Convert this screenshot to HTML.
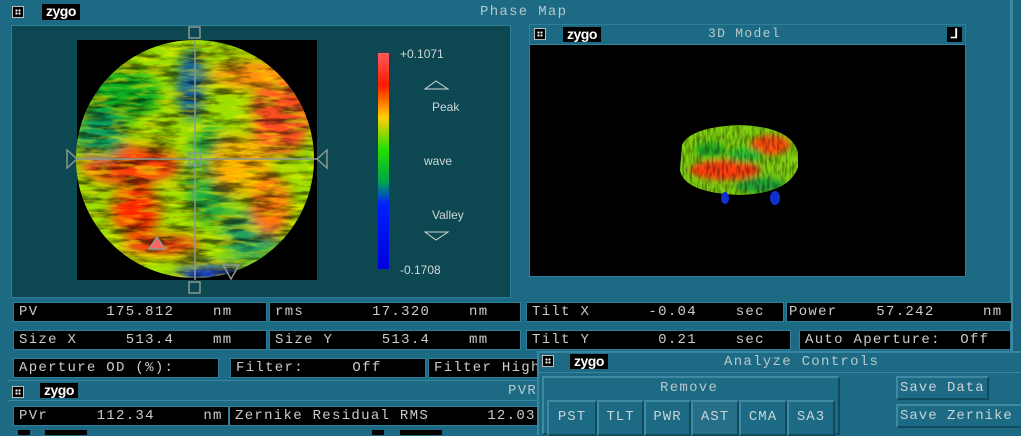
<!DOCTYPE html>
<html><head><meta charset="utf-8"><style>
*{margin:0;padding:0;box-sizing:border-box}
body{width:1021px;height:435px;overflow:hidden;background:#1d6a84;font-family:"Liberation Mono",monospace;position:relative}
.a{position:absolute}
.box{position:absolute;background:#000;color:#c8cccc;font-size:14px;letter-spacing:1.3px;line-height:19px;height:20px;white-space:pre;overflow:hidden;border:1px solid #2f7f98;padding-left:5px}
.cl{position:absolute;width:12px;height:12px;background:#000;border:1px solid #bbb}
.cl:after{content:"";position:absolute;left:2px;top:2px;width:6px;height:6px;background:radial-gradient(circle,#fff 1px,transparent 1.2px) 0 0/3px 3px}
.zy{position:absolute;background:#000;color:#fff;font:bold 14px "Liberation Sans",sans-serif;line-height:15px;padding:0 4px;letter-spacing:-0.5px}
.t{position:absolute;color:#b8c8cc;font-size:14px;letter-spacing:1.3px;white-space:pre}
.btn{position:absolute;background:#1d6a84;border:2px solid;border-color:#3f8aa2 #0f4a5d #0f4a5d #3f8aa2;color:#c8d4d6;font-size:14px;letter-spacing:1px;text-align:center;line-height:30px;white-space:pre}
</style></head><body>
<div class="cl" style="left:12px;top:6px"></div>
<div class="zy" style="left:42px;top:4px;height:16px">zygo</div>
<div class="t" style="left:480px;top:4px">Phase Map</div>
<div class="a" style="left:1010px;top:0;width:3px;height:352px;background:#3a8aa4"></div>
<div class="a" style="left:1013px;top:0;width:8px;height:352px;background:#1a6480"></div>
<div class="a" style="left:11px;top:25px;width:500px;height:273px;background:#0d4752;border:1px solid #2f7f98"></div>
<svg class="a" style="left:11px;top:25px" width="500" height="273">
<defs>
<filter id="b"><feGaussianBlur stdDeviation="6"/></filter>
<filter id="n"><feTurbulence type="fractalNoise" baseFrequency="0.03 0.15" numOctaves="4" seed="4"/><feColorMatrix type="matrix" values="0 0 0 0 0 0 0 0 0 0 0 0 0 0 0 0 0 0 -3.5 2"/></filter>
<filter id="n3"><feTurbulence type="fractalNoise" baseFrequency="0.04 0.2" numOctaves="3" seed="9"/><feColorMatrix type="matrix" values="0 0 0 0 1 0 0 0 0 0.9 0 0 0 0 0 0 0 0 -3.5 1.9"/></filter>
<clipPath id="c"><circle cx="184" cy="134" r="119"/></clipPath>
<linearGradient id="cb" x1="0" y1="0" x2="0" y2="1">
<stop offset="0" stop-color="#ff5a5a"/><stop offset=".15" stop-color="#ff1a00"/><stop offset=".3" stop-color="#ffd000"/><stop offset=".45" stop-color="#20e000"/><stop offset=".6" stop-color="#00a050"/><stop offset=".7" stop-color="#0020ff"/><stop offset="1" stop-color="#0000e0"/></linearGradient>
</defs>
<rect x="66" y="15" width="240" height="240" fill="#000"/>
<g clip-path="url(#c)">
<rect x="60" y="10" width="250" height="250" fill="#9ee000"/>
<g filter="url(#b)">
<ellipse cx="110" cy="70" rx="40" ry="25" fill="#10b020"/>
<ellipse cx="180" cy="60" rx="14" ry="35" fill="#1060a0"/>
<ellipse cx="270" cy="90" rx="30" ry="40" fill="#ff5020"/>
<ellipse cx="240" cy="50" rx="40" ry="15" fill="#ff9010"/>
<ellipse cx="120" cy="140" rx="50" ry="20" fill="#ff4010"/>
<ellipse cx="125" cy="185" rx="25" ry="25" fill="#ff2a00"/>
<ellipse cx="200" cy="150" rx="25" ry="50" fill="#20b040"/>
<ellipse cx="230" cy="140" rx="30" ry="30" fill="#ffb000"/>
<ellipse cx="90" cy="110" rx="25" ry="25" fill="#10a060"/>
<ellipse cx="240" cy="210" rx="30" ry="25" fill="#20a060"/>
<ellipse cx="200" cy="250" rx="35" ry="10" fill="#1030e0"/>
<ellipse cx="260" cy="180" rx="20" ry="30" fill="#ff7010"/>
<ellipse cx="150" cy="220" rx="40" ry="10" fill="#ff3010"/>
</g>
<rect x="60" y="10" width="250" height="250" filter="url(#n)" fill="#108030" opacity=".55"/>
<rect x="60" y="10" width="250" height="250" filter="url(#n3)" opacity=".5"/>
</g>
<g stroke="#8a9a90" fill="none" stroke-width="1.5">
<line x1="184" y1="15" x2="184" y2="255"/><line x1="66" y1="134" x2="306" y2="134"/>
<rect x="178" y="2" width="11" height="11"/><rect x="178" y="257" width="11" height="11"/><rect x="178" y="128" width="12" height="12"/>
<path d="M56 125 L66 134 L56 143 Z"/><path d="M316 125 L306 134 L316 143 Z"/>
<path d="M138 224 L146 212 L154 224 Z" fill="#ff6060"/><path d="M212 240 L228 240 L220 254 Z"/>
</g>
<rect x="367" y="28" width="11" height="216" fill="url(#cb)"/>
<g fill="#d0d8d8" font-family="Liberation Sans,sans-serif" font-size="12">
<text x="389" y="33">+0.1071</text><text x="421" y="86">Peak</text><text x="413" y="140">wave</text><text x="421" y="194">Valley</text><text x="389" y="249">-0.1708</text></g>
<path d="M414 64 L425 56 L437 64 Z M414 207 L437 207 L425 215 Z" fill="none" stroke="#d0d8d8"/>
</svg>
<div class="a" style="left:529px;top:24px;width:437px;height:253px;background:#000;border:1px solid #2f7f98"></div>
<div class="a" style="left:530px;top:25px;width:435px;height:20px;background:#1d6a84;border-bottom:1px solid #3a86a0"></div>
<div class="cl" style="left:534px;top:28px"></div>
<div class="zy" style="left:563px;top:27px">zygo</div>
<div class="t" style="left:708px;top:26px;font-size:13px">3D Model</div>
<div class="a" style="left:947px;top:27px;width:15px;height:15px;background:#000;color:#fff;font:bold 13px sans-serif;text-align:center;line-height:14px">⅃</div>
<svg class="a" style="left:670px;top:115px" width="140" height="95">
<defs><filter id="b2"><feGaussianBlur stdDeviation="3"/></filter><filter id="n2"><feTurbulence type="fractalNoise" baseFrequency="0.4 0.1" numOctaves="2"/><feColorMatrix type="matrix" values="0 0 0 0 0 0 0 0 0 0 0 0 0 0 0 0 0 0 -3 1.8"/></filter>
<clipPath id="c2"><path d="M12 30 Q20 12 70 10 Q122 12 128 38 L128 52 Q120 78 70 80 Q14 78 10 55 Z"/></clipPath></defs>
<g clip-path="url(#c2)"><rect width="140" height="95" fill="#80d010"/>
<g filter="url(#b2)"><ellipse cx="55" cy="55" rx="35" ry="10" fill="#ff4010"/><ellipse cx="100" cy="30" rx="20" ry="10" fill="#ff5010"/><ellipse cx="40" cy="35" rx="15" ry="8" fill="#20b020"/><ellipse cx="75" cy="40" rx="18" ry="8" fill="#30c030"/><ellipse cx="90" cy="70" rx="25" ry="8" fill="#20a030"/></g>
<rect width="140" height="95" filter="url(#n2)" opacity=".4"/></g>
<ellipse cx="55" cy="83" rx="4" ry="6" fill="#1030d0"/><ellipse cx="105" cy="83" rx="5" ry="7" fill="#1030d0"/>
</svg>
<div class="box" style="left:13px;top:302px;width:254px">PV       175.812    nm</div>
<div class="box" style="left:269px;top:302px;width:252px">rms       17.320    nm</div>
<div class="box" style="left:526px;top:302px;width:258px">Tilt X      -0.04    sec</div>
<div class="box" style="left:786px;top:302px;width:226px;padding-left:2px">Power    57.242     nm</div>
<div class="box" style="left:13px;top:330px;width:254px">Size X     513.4    mm</div>
<div class="box" style="left:269px;top:330px;width:252px">Size Y     513.4    mm</div>
<div class="box" style="left:526px;top:330px;width:265px">Tilt Y       0.21    sec</div>
<div class="box" style="left:799px;top:330px;width:212px">Auto Aperture:  Off</div>
<div class="box" style="left:13px;top:358px;width:206px">Aperture OD (%):</div>
<div class="box" style="left:230px;top:358px;width:196px">Filter:     Off</div>
<div class="box" style="left:428px;top:358px;width:115px">Filter High</div>
<div class="a" style="left:8px;top:380px;width:535px;height:1px;background:#3a86a0"></div>
<div class="cl" style="left:12px;top:386px"></div>
<div class="zy" style="left:40px;top:383px">zygo</div>
<div class="t" style="left:508px;top:383px">PVR</div>
<div class="a" style="left:8px;top:400px;width:535px;height:1px;background:#3a86a0"></div>
<div class="box" style="left:13px;top:406px;width:216px">PVr     112.34     nm</div>
<div class="box" style="left:229px;top:406px;width:314px">Zernike Residual RMS      12.03</div>
<div class="a" style="left:18px;top:430px;width:12px;height:5px;background:#000"></div>
<div class="a" style="left:45px;top:430px;width:42px;height:5px;background:#000"></div>
<div class="a" style="left:372px;top:430px;width:12px;height:5px;background:#000"></div>
<div class="a" style="left:400px;top:430px;width:42px;height:5px;background:#000"></div>
<div class="a" style="left:537px;top:351px;width:484px;height:84px;background:#1d6a84;border-left:2px solid #3a86a0;border-top:2px solid #3a86a0"></div>
<div class="cl" style="left:542px;top:355px"></div>
<div class="zy" style="left:570px;top:354px">zygo</div>
<div class="t" style="left:724px;top:354px">Analyze Controls</div>
<div class="a" style="left:539px;top:372px;width:482px;height:1px;background:#3a86a0"></div>
<div class="a" style="left:542px;top:376px;width:298px;height:59px;border:2px solid;border-color:#3f8aa2 #0f4a5d #0f4a5d #3f8aa2"></div>
<div class="t" style="left:660px;top:380px">Remove</div>
<div class="btn" style="left:547px;top:400px;width:50px;height:36px">PST</div>
<div class="btn" style="left:597px;top:400px;width:47px;height:36px">TLT</div>
<div class="btn" style="left:644px;top:400px;width:47px;height:36px">PWR</div>
<div class="btn" style="left:691px;top:400px;width:48px;height:36px;background:#256f88">AST</div>
<div class="btn" style="left:739px;top:400px;width:48px;height:36px">CMA</div>
<div class="btn" style="left:787px;top:400px;width:48px;height:36px">SA3</div>
<div class="btn" style="left:896px;top:376px;width:93px;height:24px;line-height:20px;text-align:left;padding-left:2px">Save Data</div>
<div class="btn" style="left:896px;top:404px;width:130px;height:24px;line-height:20px;text-align:left;padding-left:2px">Save Zernike</div>
</body></html>
